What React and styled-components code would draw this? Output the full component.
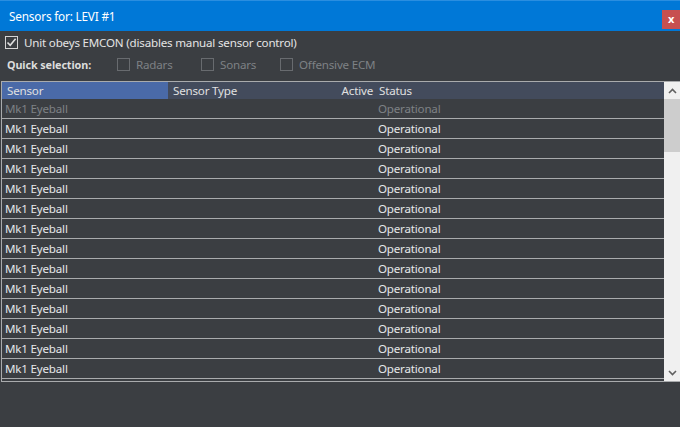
import React from "react";
import styled, { createGlobalStyle } from "styled-components";

const Global = createGlobalStyle`
  html, body { margin: 0; padding: 0; background: #3b3e42; }
  body { font-family: "Noto Sans", "Open Sans", sans-serif; font-size: 11.6px; letter-spacing: -0.2px; }
  * { box-sizing: border-box; }
`;

const Window = styled.div`
  width: 680px;
  height: 427px;
  background: #3b3e42;
  display: flex;
  flex-direction: column;
  overflow: hidden;
`;

const TitleBar = styled.div`
  height: 31px;
  background: #0078d7;
  border-top: 1px solid #2a8ee0;
  display: flex;
  align-items: center;
  justify-content: space-between;
  padding-left: 9px;
`;

const Title = styled.span`
  color: #ffffff;
  font-size: 11.8px;
`;

const CloseButton = styled.div`
  width: 18px;
  height: 19px;
  margin-top: 6px;
  background: #c75050;
  color: #fff;
  font-weight: bold;
  font-size: 11px;
  display: flex;
  align-items: center;
  justify-content: center;
  line-height: 1;
  padding-bottom: 2px;
`;

const OptionRow = styled.div`
  display: flex;
  align-items: center;
  height: ${(p) => p.h}px;
  padding-left: ${(p) => p.pl}px;
`;

const Box = styled.span`
  width: 13px;
  height: 13px;
  border: 1px solid ${(p) => (p.disabled ? "#686b6f" : "#d4d4d4")};
  display: inline-flex;
  align-items: center;
  justify-content: center;
  flex: none;
`;

const CheckLabel = styled.label`
  display: inline-flex;
  align-items: center;
  gap: 6px;
  color: ${(p) => (p.disabled ? "#7e8185" : "#e4e4e4")};
  width: ${(p) => (p.w ? `${p.w}px` : "auto")};
  flex: none;
`;

const BoldLabel = styled.span`
  font-weight: bold;
  color: #dcdcdc;
  font-size: 10.8px;
  letter-spacing: -0.1px;
  width: 110px;
  flex: none;
`;

const Check = ({ checked, disabled, label, w }) => (
  <CheckLabel disabled={disabled} w={w}>
    <Box disabled={disabled}>
      {checked && (
        <svg width="11" height="11" viewBox="0 0 11 11">
          <path d="M1.5 5.5 L4.2 8.3 L9.6 1.8" fill="none" stroke="#e0e0e0" strokeWidth="1.6" />
        </svg>
      )}
    </Box>
    {label}
  </CheckLabel>
);

const Table = styled.div`
  margin-top: 6px;
  margin-left: 1px;
  border-top: 1px solid #a9abad;
  border-left: 1px solid #a9abad;
  border-bottom: 1px solid #a9abad;
  display: flex;
  height: 301px;
`;

const Grid = styled.div`
  flex: 1;
  display: flex;
  flex-direction: column;
`;

const Cols = `
  display: grid;
  grid-template-columns: 166px 138px 68px 1fr;
`;

const HeaderRow = styled.div`
  ${Cols}
  height: 17px;
  background: #434b5c;
  color: #e0e0e0;
`;

const HeaderCell = styled.div`
  display: flex;
  align-items: center;
  padding: 0 ${(p) => (p.right ? "1px" : "5px")};
  justify-content: ${(p) => (p.right ? "flex-end" : "flex-start")};
  background: ${(p) => (p.selected ? "#4a6aa8" : "transparent")};
  line-height: 1;
`;

const Row = styled.div`
  ${Cols}
  height: 20px;
  border-bottom: 1px solid #a9abad;
  color: ${(p) => (p.disabled ? "#7e8185" : "#e6e8ea")};
`;

const Cell = styled.div`
  display: flex;
  align-items: center;
  padding-left: ${(p) => p.pl ?? 3}px;
  padding-top: 1px;
  line-height: 1;
`;

const ScrollBar = styled.div`
  width: 16px;
  background: #f0f0f0;
  display: flex;
  flex-direction: column;
`;

const ScrollArrow = styled.div`
  height: 17px;
  display: flex;
  align-items: center;
  justify-content: center;
`;

const Thumb = styled.div`
  height: 53px;
  background: #cdcdcd;
`;

const Track = styled.div`
  flex: 1;
`;

const rows = Array.from({ length: 14 });

export default function App() {
  return (
    <>
      <Global />
      <Window>
        <TitleBar>
          <Title>Sensors for: LEVI #1</Title>
          <CloseButton>x</CloseButton>
        </TitleBar>
        <OptionRow h={23} pl={5}>
          <Check checked label="Unit obeys EMCON (disables manual sensor control)" />
        </OptionRow>
        <OptionRow h={21} pl={7}>
          <BoldLabel>Quick selection:</BoldLabel>
          <Check disabled label="Radars" w={84} />
          <Check disabled label="Sonars" w={79} />
          <Check disabled label="Offensive ECM" />
        </OptionRow>
        <Table>
          <Grid>
            <HeaderRow>
              <HeaderCell selected>Sensor</HeaderCell>
              <HeaderCell>Sensor Type</HeaderCell>
              <HeaderCell right>Active</HeaderCell>
              <HeaderCell>Status</HeaderCell>
            </HeaderRow>
            {rows.map((_, i) => (
              <Row key={i} disabled={i === 0}>
                <Cell>Mk1 Eyeball</Cell>
                <Cell />
                <Cell />
                <Cell pl={4}>Operational</Cell>
              </Row>
            ))}
          </Grid>
          <ScrollBar>
            <ScrollArrow>
              <svg width="9" height="6" viewBox="0 0 9 6">
                <path d="M1 5 L4.5 1.5 L8 5" fill="none" stroke="#606060" strokeWidth="1.6" />
              </svg>
            </ScrollArrow>
            <Thumb />
            <Track />
            <ScrollArrow>
              <svg width="9" height="6" viewBox="0 0 9 6">
                <path d="M1 1 L4.5 4.5 L8 1" fill="none" stroke="#606060" strokeWidth="1.6" />
              </svg>
            </ScrollArrow>
          </ScrollBar>
        </Table>
      </Window>
    </>
  );
}
